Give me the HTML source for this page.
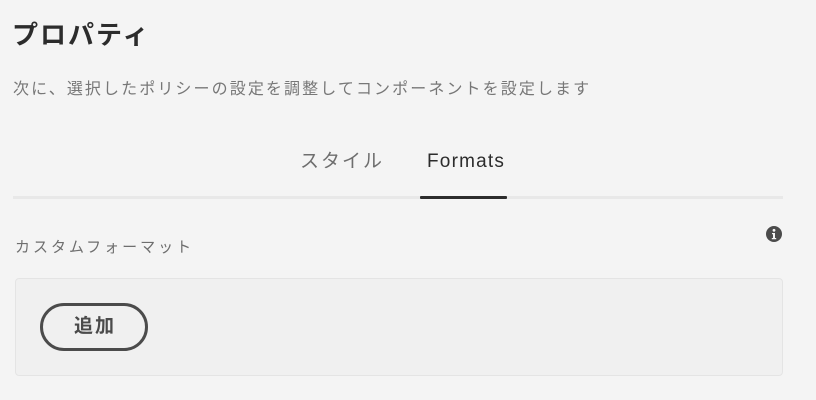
<!DOCTYPE html>
<html><head><meta charset="utf-8"><style>
body{margin:0;width:816px;height:400px;background:#f4f4f4;font-family:"Liberation Sans","Noto Sans CJK JP",sans-serif;position:relative;overflow:hidden}
.a{position:absolute;white-space:nowrap}
</style></head><body>
<div class="a" style="left:12px;top:17px;font-size:26px;font-weight:bold;color:#2c2c2c;line-height:36px;letter-spacing:2px">プロパティ</div>
<div class="a" style="left:13px;top:79px;font-size:16px;color:#777;line-height:22px;letter-spacing:2.1px">次に、選択したポリシーの設定を調整してコンポーネントを設定します</div>
<div class="a" style="left:300px;top:149px;font-size:19px;color:#6e6e6e;line-height:26px;letter-spacing:2px">スタイル</div>
<div class="a" style="left:427px;top:149px;font-size:19px;color:#2c2c2c;line-height:26px;letter-spacing:1.2px">Formats</div>
<div class="a" style="left:13px;top:196px;width:770px;height:3px;background:#e8e8e8"></div>
<div class="a" style="left:420px;top:196px;width:87px;height:3px;background:#2c2c2c;border-radius:1px"></div>
<div class="a" style="left:15px;top:237px;font-size:15px;color:#6e6e6e;line-height:22px;letter-spacing:3px">カスタムフォーマット</div>
<svg class="a" style="left:766px;top:226px" width="16" height="16" viewBox="0 0 16 16"><circle cx="8" cy="8" r="8" fill="#4b4b4b"/><circle cx="8" cy="4.3" r="1.4" fill="#f4f4f4"/><path d="M6 7h3v5h1.2v1.3H5.8V12H7V8.3H6z" fill="#f4f4f4"/></svg>
<div class="a" style="left:15px;top:278px;width:766px;height:96px;background:#f0f0f0;border:1px solid #e4e4e4;border-radius:4px"></div>
<div class="a" style="left:40px;top:303px;width:102px;height:42px;border:3px solid #4b4b4b;border-radius:24px;text-align:center;line-height:42px;font-size:19px;font-weight:bold;color:#4b4b4b;letter-spacing:2px;text-indent:2px">追加</div>
</body></html>
